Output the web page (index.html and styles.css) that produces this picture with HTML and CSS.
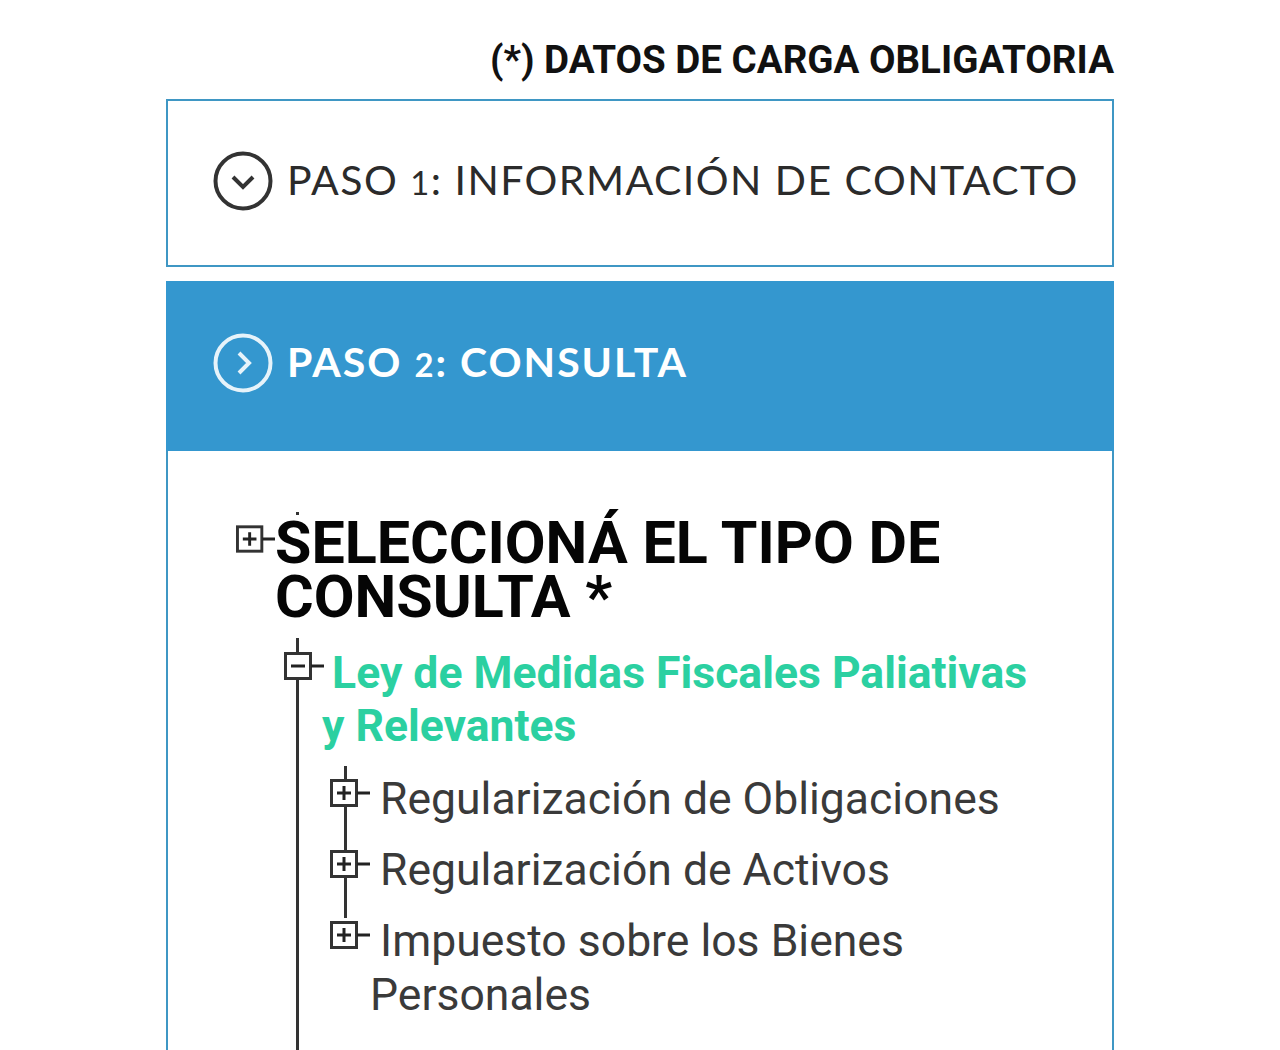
FILE: index.html
```html
<!DOCTYPE html>
<html lang="es">
<head>
    <meta charset="UTF-8">
    <meta name="viewport" content="width=device-width, initial-scale=1.0">
    <title>Consulta</title>
    <link rel="stylesheet" href="styles.css">
</head>
<body>
    <svg class="defs" width="0" height="0">
        <symbol id="tree-plus" viewBox="0 0 40 28">
            <rect x="1.5" y="1.5" width="25" height="25" fill="#fff" stroke="#333" stroke-width="3"/>
            <path d="M7 14h14M14 7v14M27 14h13" fill="none" stroke="#222" stroke-width="3"/>
        </symbol>
        <symbol id="tree-minus" viewBox="0 0 40 28">
            <rect x="1.5" y="1.5" width="25" height="25" fill="#fff" stroke="#333" stroke-width="3"/>
            <path d="M7 14h14M27 14h13" fill="none" stroke="#222" stroke-width="3"/>
        </symbol>
    </svg>

    <div class="wrapper">
        <p class="note">(*) DATOS DE CARGA OBLIGATORIA</p>

        <div class="step">
            <svg class="step-icon" viewBox="0 0 60 60">
                <circle cx="30" cy="30" r="27.5" fill="none" stroke="#333" stroke-width="4"/>
                <path d="M20 26l10 10 10-10" fill="none" stroke="#333" stroke-width="4"/>
            </svg>
            <span class="step-label">PASO <span class="num">1</span>: INFORMACIÓN DE CONTACTO</span>
        </div>

        <div class="step step-active">
            <svg class="step-icon" viewBox="0 0 60 60">
                <circle cx="30" cy="30" r="27.5" fill="none" stroke="#e6f3fa" stroke-width="4"/>
                <path d="M26 20l10 10-10 10" fill="none" stroke="#e6f3fa" stroke-width="4"/>
            </svg>
            <span class="step-label">PASO <span class="num">2</span>: CONSULTA</span>
        </div>

        <div class="panel">
            <div class="tree-head">
                <svg class="icon-root"><use href="#tree-plus"/></svg>
                <h2>SELECCIONÁ EL TIPO DE CONSULTA *</h2>
            </div>
            <div class="tree-branch">
                <p class="branch-title"><svg class="icon-branch"><use href="#tree-minus"/></svg> Ley de Medidas Fiscales Paliativas y Relevantes</p>
                <ul class="tree-items">
                    <li><svg class="icon-item"><use href="#tree-plus"/></svg> Regularización de Obligaciones</li>
                    <li><svg class="icon-item"><use href="#tree-plus"/></svg> Regularización de Activos</li>
                    <li><svg class="icon-item"><use href="#tree-plus"/></svg> Impuesto sobre los Bienes Personales</li>
                </ul>
            </div>
        </div>
    </div>
</body>
</html>
```

FILE: styles.css
```css
html, body {
    height: 1050px;
    overflow: hidden;
}
body {
    margin: 0;
    background: #fff;
    font-family: Roboto, "Liberation Sans", sans-serif;
}
.defs {
    display: block;
    height: 0;
}
.wrapper {
    width: 948px;
    margin: 0 auto;
}
.note {
    margin: 0;
    padding-top: 37px;
    height: 99px;
    box-sizing: border-box;
    line-height: 45px;
    text-align: right;
    font-size: 38.5px;
    font-weight: 700;
    color: #111;
    white-space: nowrap;
}
.step {
    display: flex;
    align-items: center;
    gap: 14px;
    box-sizing: border-box;
    height: 168px;
    margin-bottom: 14px;
    padding: 0 0 4px 45px;
    border: 2px solid #3f97c4;
    font-family: Lato, "Open Sans", sans-serif;
    font-size: 41px;
    letter-spacing: 1.47px;
    color: #2b2b2b;
    white-space: nowrap;
}
.step-label {
    padding-bottom: 4px;
}
.step-active {
    height: 170px;
    margin-bottom: 0;
    border-color: #3497cf;
    background: #3497cf;
    color: #fff;
    font-weight: 700;
    letter-spacing: 2px;
    padding-bottom: 6px;
}
.num {
    font-size: 0.8em;
}
.step-icon {
    width: 60px;
    height: 60px;
    flex: none;
}
.panel {
    box-sizing: border-box;
    height: 599px;
    padding-top: 65px;
    border: 2px solid #3f97c4;
    border-width: 0 2px;
}
.tree-head {
    position: relative;
    display: flex;
    padding-left: 68px;
}
.tree-head::before {
    content: "";
    position: absolute;
    left: 128px;
    top: -4px;
    width: 3px;
    height: 3px;
    background: #333;
}
.icon-root {
    flex: none;
    width: 39px;
    height: 28px;
    margin-top: 9px;
}
.tree-head h2 {
    margin: 0;
    font-size: 59.2px;
    line-height: 54px;
    font-weight: 700;
    color: #050505;
}
.tree-branch {
    box-sizing: border-box;
    margin: 14px 0 0 128px;
    padding: 9px 0 0 23px;
    border-left: 3px solid #333;
    height: 412px;
}
.branch-title {
    margin: 0;
    padding-right: 60px;
    font-size: 44.5px;
    line-height: 53px;
    font-weight: 700;
    color: #2bd0a1;
}
.icon-branch {
    width: 40px;
    height: 28px;
    margin: 0 -3px 0 -38px;
    vertical-align: 8px;
}
.tree-items {
    list-style: none;
    margin: 19px 0 0;
    padding: 0 60px 0 48px;
    font-size: 44.5px;
    line-height: 54px;
    color: #3a3a3a;
}
.tree-items li {
    position: relative;
    margin-bottom: 17px;
}
.tree-items li::before {
    content: "";
    position: absolute;
    left: -26px;
    top: -6px;
    bottom: -17px;
    width: 3px;
    background: #333;
}
.tree-items li:last-child::before {
    top: -6px;
    bottom: auto;
    height: 10px;
}
.icon-item {
    position: relative;
    width: 40px;
    height: 28px;
    margin: 0 -1px 0 -40px;
    vertical-align: 7px;
}
```
